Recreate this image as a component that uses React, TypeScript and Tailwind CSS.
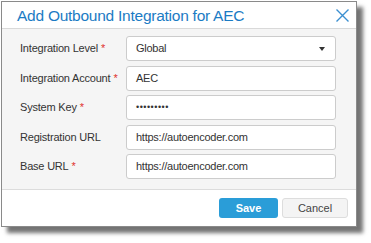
import React from 'react';

interface FieldRow {
  label: string;
  required: boolean;
  value: string;
  select?: boolean;
}

const rows: FieldRow[] = [
  { label: 'Integration Level', required: true, value: 'Global', select: true },
  { label: 'Integration Account', required: true, value: 'AEC' },
  { label: 'System Key', required: true, value: '•••••••••' },
  { label: 'Registration URL', required: false, value: 'https://autoencoder.com' },
  { label: 'Base URL', required: true, value: 'https://autoencoder.com' },
];

const App: React.FC = () => {
  return (
    <div
      className="w-[371px] h-[243px] bg-white pl-[1px] pt-[1px] overflow-hidden"
      style={{ fontFamily: '"Liberation Sans", Arial, sans-serif' }}
    >
      <div className="w-[356px] h-[226px] border border-[#8a8a8a] bg-white flex flex-col shadow-[6px_6px_4px_rgba(0,0,0,0.55)]">
        {/* Header */}
        <div className="h-[27px] flex items-center justify-between border-b border-[#d9d9d9] pl-[15px] pr-[6px]">
          <span className="text-[15.5px] text-[#1b7bc4] leading-none mt-[1px] tracking-[-0.25px]">Add Outbound Integration for AEC</span>
          <svg width="13" height="13" viewBox="0 0 13 13" className="mr-[1px]">
            <path d="M0.5 0.5 L12.5 12.5 M12.5 0.5 L0.5 12.5" stroke="#3b8fd0" strokeWidth="1.4" fill="none" />
          </svg>
        </div>

        {/* Body */}
        <div className="bg-[#f5f5f5] flex flex-col gap-[4.5px] pt-[7px] pb-[10px] border-b border-[#dcdcdc]">
          {rows.map((row) => (
            <div key={row.label} className="flex items-center h-[25px]">
              <div className="w-[124px] pl-[18px] text-[11px] tracking-[-0.2px] text-[#333333] whitespace-nowrap">
                {row.label}
                {row.required && <span className="text-[#e0312f] ml-[3px]">*</span>}
              </div>
              <div className="w-[210px] h-[25px] bg-white border border-[#cccccc] rounded-[3px] flex items-center justify-between pl-[9px] pr-[10px] text-[11px] tracking-[-0.25px] text-[#333333]">
                <span className={row.value.startsWith('•') ? 'text-[9px] tracking-[0.5px]' : ''}>{row.value}</span>
                {row.select && (
                  <svg width="6" height="4" viewBox="0 0 6 4">
                    <path d="M0 0 L6 0 L3 4 Z" fill="#333333" />
                  </svg>
                )}
              </div>
            </div>
          ))}
        </div>

        {/* Footer */}
        <div className="flex-1 flex justify-end items-start gap-[4px] pt-[8px] pr-[8px]">
          <button className="w-[59px] h-[20px] rounded-[3px] bg-[#2a9dd8] text-white text-[11px] font-bold">
            Save
          </button>
          <button className="w-[66px] h-[20px] rounded-[3px] bg-[#f4f4f4] border border-[#dddddd] text-[#444444] text-[11px]">
            Cancel
          </button>
        </div>
      </div>
    </div>
  );
};

export default App;
